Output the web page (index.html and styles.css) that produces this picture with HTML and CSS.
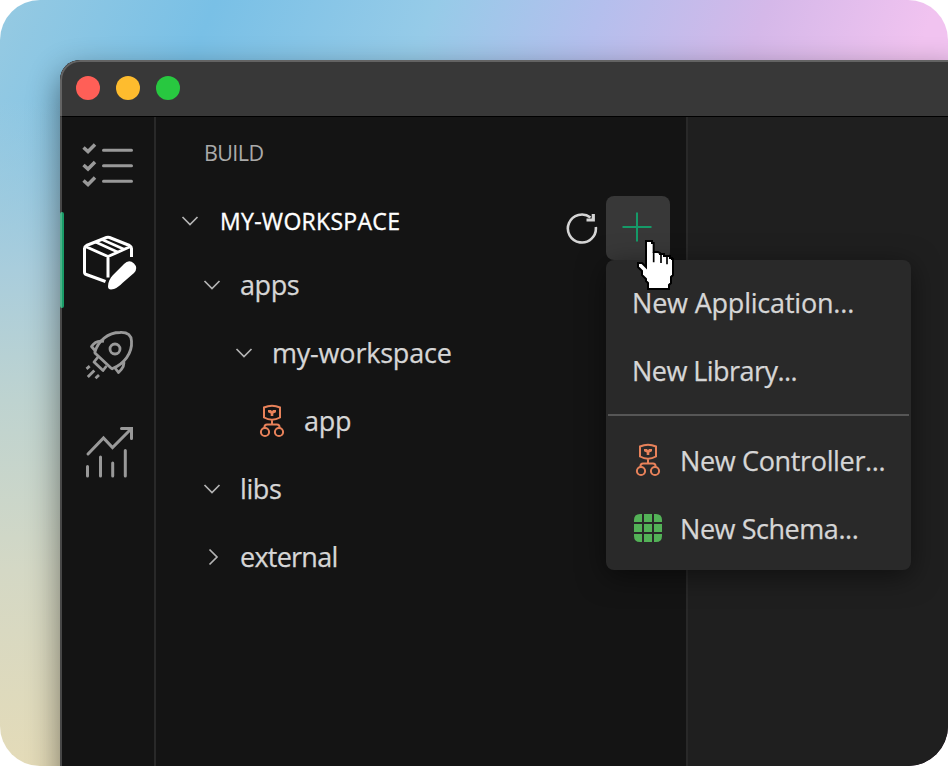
FILE: index.html
```html
<!DOCTYPE html>
<html lang="en">
<head>
<meta charset="utf-8">
<title>Build</title>
<link rel="stylesheet" href="styles.css">
</head>
<body>
<svg width="0" height="0" class="defs">
  <symbol id="down" viewBox="0 0 20 20"><path d="M2.500 6 10 13.500 17.500 6" fill="none" stroke="currentColor" stroke-width="1.700"/></symbol>
  <symbol id="ctrl" viewBox="0 0 26 34"><g fill="none" stroke="#e8825a" stroke-width="2">
    <path d="M5 3.500Q13 0 21 3.500V13.500Q13 18 5 13.500ZM13 16V20.500M5.500 24.500V23Q5.500 20.500 8 20.500H18Q20.500 20.500 20.500 23V24.500"/>
    <circle cx="6" cy="28" r="4.100"/><circle cx="20" cy="28" r="4.100"/></g>
    <path d="M9 6H12L13 7.200 14 6H17V8.200L14.300 9.500V12H11.700V9.500L9 8.200Z" fill="#e8825a"/></symbol>
</svg>
<div class="stage">
  <div class="window">
    <header class="titlebar"><i class="dot red"></i><i class="dot yellow"></i><i class="dot green"></i></header>
    <div class="content">
      <nav class="activity">
        <div class="tool"><svg width="96" height="96" viewBox="0 0 96 96" fill="none" stroke="currentColor" stroke-width="3" stroke-linecap="round" stroke-linejoin="round"><path d="M43.500 33.300H71.500M43.500 48.700H71.500M43.500 64.300H71.500"/><path stroke-linecap="butt" stroke-linejoin="miter" stroke-width="3.500" d="M23.500 30.500 28 34.500 35 27.500M23.500 48 28 52 35 45M23.500 63.500 28 67.500 35 60.500"/></svg></div>
        <div class="tool active"><svg width="96" height="96" viewBox="0 0 96 96" fill="none" stroke="currentColor" stroke-width="3" stroke-linejoin="round"><path d="M45.500 68.500 26.300 61.500Q24.500 61 24.500 59V35.500Q24.500 33.500 26.500 32.500L46.500 24.500Q48 24 49.500 24.500L69.500 32.500Q71.500 33.500 71.500 35.500V44M25.500 33.500 48 43.500 70.500 33.500M48 43.500V64.500"/><path stroke-width="2.600" d="M35.500 29 57.500 39M42 26.500 64 36.300"/><path d="M48 73.500C48 69 50 65 53 62L64 51Q69 46 74 50.500 78.500 55 74 60L63 69.500Q57 76 51 76.500 48 76.500 48 73.500Z" fill="currentColor" stroke="none"/></svg></div>
        <div class="tool"><svg width="96" height="96" viewBox="0 0 96 96"><g transform="translate(0 6)" fill="none" stroke="currentColor" stroke-width="2.800" stroke-linejoin="round"><path d="M35 37C38 26 48 17.500 60 17.500Q71 17 71.500 26C72.500 38 64 49 52.500 53.500Q52 54 51 53L36 39Q34.500 38 35 37Z"/><circle cx="55" cy="34" r="5"/><path d="M35 35.500 31.500 31.500Q36 24.500 44 26.500M63.500 45.500Q65.500 51 58.500 57.500L55 53M38 42 34 47 43 55.500 46.500 51M29.700 51.200 26.500 53.800M34.300 55.500 27.800 62M39 60 35.500 63.200"/></g></svg></div>
        <div class="tool"><svg width="96" height="96" viewBox="0 0 96 96" fill="none" stroke="currentColor" stroke-width="3" stroke-linecap="round"><path transform="translate(0 7)" d="M28 42 43.500 26 52.500 35.500 71 17M61.500 16.500H71.500V26.500M27.500 54.500V64M40.500 45V64M52.700 51V64M65.300 38.500V64" stroke-linejoin="miter"/></svg></div>
      </nav>
      <aside class="sidebar">
        <div class="caption"><span class="t-build">BUILD</span></div>
        <div class="section"><svg class="chev" width="20" height="20"><use href="#down"/></svg><strong>MY-WORKSPACE</strong>
          <svg class="refresh" width="34" height="34" viewBox="0 0 34 34" fill="none" stroke="#d4d4d4" stroke-width="2.600"><path d="M30.800 16A14 14 0 1 1 25.500 6.500"/><path stroke-width="3.200" d="M28.300 3V9H21.500"/></svg>
          <button class="add" aria-label="New"><svg width="32" height="32" viewBox="0 0 32 32" stroke="#159a68" stroke-width="2"><path d="M1.500 16H30.500M16 1.500V30.500"/></svg></button>
        </div>
        <div class="row lvl1"><svg class="chev" width="20" height="20"><use href="#down"/></svg><span class="t-apps">apps</span></div>
        <div class="row lvl2"><svg class="chev" width="20" height="20"><use href="#down"/></svg><span class="t-ws">my-workspace</span></div>
        <div class="row lvl3"><svg width="26" height="34"><use href="#ctrl"/></svg><span class="t-app">app</span></div>
        <div class="row lvl1"><svg class="chev" width="20" height="20"><use href="#down"/></svg><span class="t-libs">libs</span></div>
        <div class="row lvl1"><svg class="chev" width="20" height="20" viewBox="0 0 20 20"><path d="M7.500 2.500 15 10 7.500 17.500" fill="none" stroke="currentColor" stroke-width="1.700"/></svg><span class="t-ext">external</span></div>
      </aside>
      <main class="editor"></main>
    </div>
  </div>
  <div class="menu">
    <div class="item"><span class="t-na">New Application...</span></div>
    <div class="item"><span class="t-nl">New Library...</span></div>
    <hr>
    <div class="item icon"><svg width="26" height="34"><use href="#ctrl"/></svg><span class="t-nc">New Controller...</span></div>
    <div class="item icon"><svg width="28" height="28" viewBox="0 0 28 28" fill="#53b257"><path d="M8 0V8H0V6Q0 0 6 0ZM10 0H18V8H10ZM20 0H22Q28 0 28 6V8H20ZM0 10H8V18H0ZM10 10H18V18H10ZM20 10H28V18H20ZM0 20H8V28H6Q0 28 0 22ZM10 20H18V28H10ZM20 20H28V22Q28 28 22 28H20Z"/></svg><span class="t-ns">New Schema...</span></div>
  </div>
  <svg class="cursor" width="40" height="52" viewBox="255 162 120 156"><path d="M288 168H306V174H311V201H324L330 204V207H342V213H360V219H366V222H369V270L363 276V294L357 300V312H294V294L288 288V282L282 276 276 270V258L264 246V234H276L282 240 288 246Z" fill="#fff" stroke="#000" stroke-width="6"/><path d="M311 201V232M333 207V234M351 213V238" stroke="#000" stroke-width="5"/></svg>
</div>
</body>
</html>
```
FILE: styles.css
```css
* { box-sizing: border-box; }
body { margin: 0; background: #fff; font: 27px/1 "Open Sans", "Noto Sans", sans-serif; color: #d6d6d6; }
.defs { position: absolute; }
.stage {
  position: relative; width: 948px; height: 766px; padding: 60px 0 0 60px; overflow: hidden; border-radius: 40px;
  background:
    linear-gradient(180deg, transparent 100px, #a9cddc 270px, #bed3d0 400px, #d4d8c5 570px, #e4dbb8 766px) 0 0 / 60px 100% no-repeat,
    linear-gradient(112deg, #96cae2 0, #79c0e6 200px, #96cbe8 405px, #b4bfed 560px, #d5b8e9 715px, #f1c3f0 870px);
}
.window {
  position: relative; display: flex; flex-direction: column; width: 900px; height: 740px; overflow: hidden;
  border-radius: 20px 0 0 0; background: #141414; box-shadow: 0 12px 32px rgba(0, 0, 0, .48);
}
/* Translucent rim over the window's edge */
.window::after {
  content: ""; position: absolute; inset: 0; border-radius: inherit; pointer-events: none;
  border: solid rgba(255, 255, 255, .22); border-width: 2px 0 0 2px;
}
.titlebar { display: flex; flex: none; align-items: center; gap: 16px; height: 57px; padding: 0 0 0 16px; background: #383838; border-bottom: 1px solid #000; }
.dot { width: 24px; height: 24px; border-radius: 50%; }
.red { background: #ff5f57; }
.yellow { background: #febc2e; }
.green { background: #28c840; }
.content { display: flex; flex: 1; }
.activity { width: 96px; border-right: 2px solid #292929; color: #999; }
.tool { height: 96px; }
.tool svg { display: block; }
.active { color: #fff; position: relative; }
.active::before { content: ""; position: absolute; left: 0; top: -1px; width: 4px; height: 96px; background: #199c68; border-radius: 2px; }
.sidebar { width: 532px; border-right: 2px solid #292929; }
.editor { flex: 1; background: #1f1f1f; }
.caption { display: flex; align-items: center; height: 72px; padding-left: 48px; font-size: 21.500px; color: #aaa; }
.section { display: flex; align-items: center; height: 64px; margin-bottom: -2px; padding: 0 16px 0 24px; color: #fff; }
.section strong { font-size: 23px; font-weight: 500; margin-left: 20px; letter-spacing: .3px; -webkit-text-stroke: .35px #fff; }
.chev { flex: none; color: #b4b4b4; }
.refresh { margin-left: auto; margin-top: 13px; }
.add { display: flex; align-items: center; justify-content: center; width: 64px; height: 64px; margin: 14px 0 0 7px; padding: 0 2px 2px 0; border: 0; border-radius: 8px; background: #383838; }
.row { display: flex; align-items: center; height: 68px; }
.row svg { margin-top: -1px; }
.row .chev { margin-top: 0; }
.row span { margin: -2px 0 0 18px; }
.row span, .item span { -webkit-text-stroke: .25px #d6d6d6; }
.lvl1 { padding-left: 46px; }
.lvl2 { padding-left: 78px; }
.lvl3 { padding-left: 103px; }
.row .t-app { margin-left: 19px; letter-spacing: -.3px; }
.t-build { letter-spacing: -.6px; }
.t-apps, .t-libs { letter-spacing: -.4px; }
.t-ws, .t-na { letter-spacing: -.2px; }
.t-ext { letter-spacing: -.75px; }
.t-nl { letter-spacing: -.55px; }
.t-nc { letter-spacing: -.35px; }
.t-ns { letter-spacing: -.45px; }
.menu { position: absolute; left: 606px; top: 260px; width: 305px; height: 310px; padding: 8px 2px; border-radius: 8px; background: #292929; box-shadow: 0 6px 28px rgba(0, 0, 0, .5); }
.menu hr { height: 2px; margin: 10px 0 10px; border: 0; background: #565656; }
.item { display: flex; align-items: center; height: 68px; padding-left: 24px; white-space: nowrap; }
.item.icon { padding-left: 26px; }
.icon svg { width: 28px; }
.icon span { margin-left: 18px; }
.cursor { position: absolute; left: 635px; top: 239px; }
```
